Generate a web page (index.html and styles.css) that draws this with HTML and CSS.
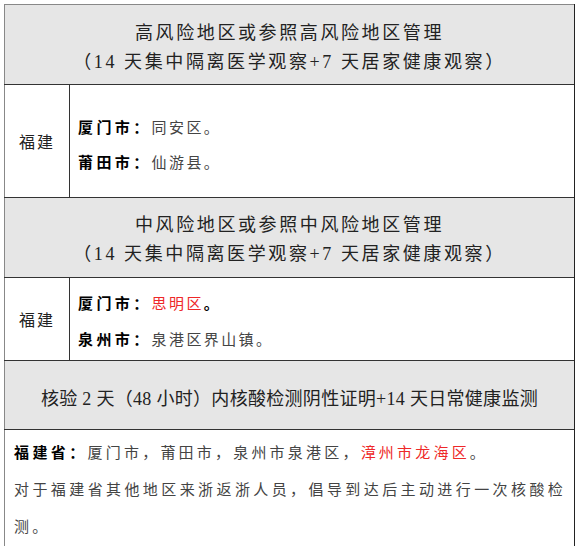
FILE: index.html
```html
<!DOCTYPE html>
<html lang="zh-CN">
<head>
<meta charset="utf-8">
<link rel="stylesheet" href="styles.css">
</head>
<body>
<table class="risk">
  <colgroup><col class="c1"><col class="c2"></colgroup>
  <tr class="head h1">
    <td colspan="2"><div>高风险地区或参照高风险地区管理</div><div>（14 天集中隔离医学观察+7 天居家健康观察）</div></td>
  </tr>
  <tr class="r1">
    <td class="prov">福建</td>
    <td class="areas"><div><b>厦门市：</b>同安区。</div><div><b>莆田市：</b>仙游县。</div></td>
  </tr>
  <tr class="head h2">
    <td colspan="2"><div>中风险地区或参照中风险地区管理</div><div>（14 天集中隔离医学观察+7 天居家健康观察）</div></td>
  </tr>
  <tr class="r2">
    <td class="prov">福建</td>
    <td class="areas"><div><b>厦门市：</b><span class="red">思明区</span><b>。</b></div><div><b>泉州市：</b>泉港区界山镇。</div></td>
  </tr>
  <tr class="head h3">
    <td colspan="2">核验 2 天（48 小时）内核酸检测阴性证明+14 天日常健康监测</td>
  </tr>
  <tr class="r3">
    <td colspan="2" class="note"><div><b>福建省：</b>厦门市，莆田市，泉州市泉港区，<span class="red">漳州市龙海区</span>。</div><div>对于福建省其他地区来浙返浙人员，倡导到达后主动进行一次核酸检测。</div></td>
  </tr>
</table>
</body>
</html>
```
FILE: styles.css
```css
body {
  margin: 4px;
  background: #fff;
  font-family: "Liberation Serif", "Noto Sans CJK SC", serif;
  color: #444;
}
.risk {
  border-collapse: collapse;
  width: 572px;
  table-layout: fixed;
  border-top: 1px solid #888;
  border-left: 1px solid #888;
  border-right: 2px solid #222;
}
.c1 { width: 65px; }
.risk td {
  border-bottom: 1.5px solid #333;
  padding: 0;
}
.head td {
  background: #e6e6e6;
  color: #222;
  text-align: center;
  font-size: 18px;
  vertical-align: middle;
}
.h1 td, .h2 td {
  letter-spacing: 2.6px;
  line-height: 29px;
}
.h1 td { height: 73px; padding-top: 6px; }
.h2 td { height: 74px; padding-top: 5px; }
.h3 td { height: 64px; padding-top: 4px; letter-spacing: 0.3px; }
.prov {
  text-align: center;
  font-size: 16px;
  letter-spacing: 2px;
  color: #222;
  border-right: 1px solid #333;
  vertical-align: middle;
}
.areas {
  padding-left: 8px !important;
  font-size: 15px;
  letter-spacing: 2.4px;
  vertical-align: middle;
}
.r1 td { height: 102px; }
.r1 .areas { line-height: 35px; padding-top: 10px !important; }
.r2 td { height: 76px; }
.r2 .areas { line-height: 36px; padding-top: 6px !important; }
.note {
  height: 106px;
  padding: 5px 8px 0 9px !important;
  font-size: 15px;
  letter-spacing: 3.2px;
  line-height: 37px;
  vertical-align: top;
  text-align: justify;
}
b {
  color: #000;
  font-weight: 700;
  letter-spacing: 3.4px;
}
.red { color: #ee2828; }
```
